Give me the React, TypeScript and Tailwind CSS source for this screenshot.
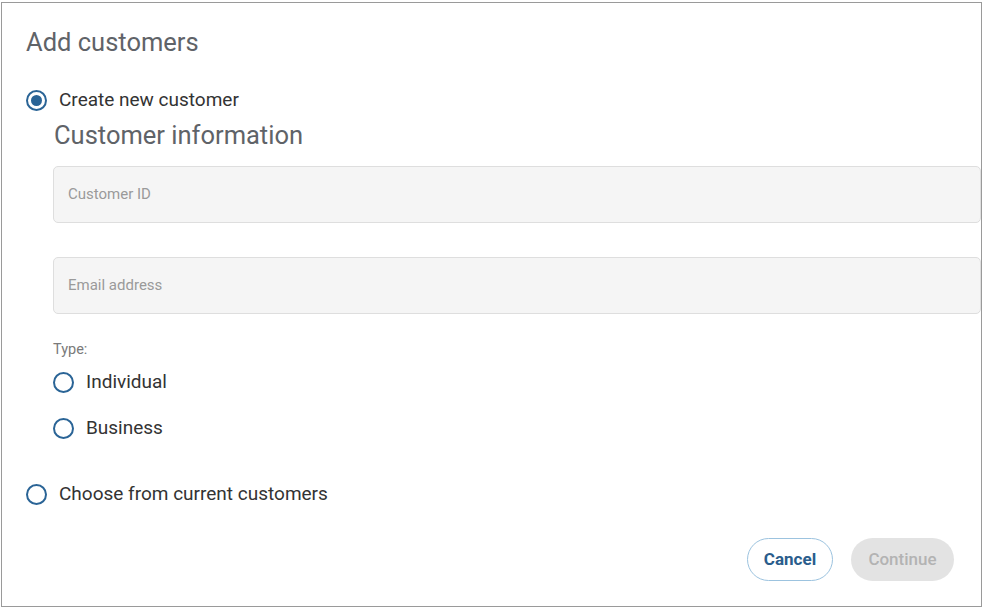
import React from "react";

function Radio({ checked }: { checked?: boolean }) {
  return (
    <span className="flex h-[21px] w-[21px] shrink-0 items-center justify-center rounded-full border-2 border-[#2a6496] bg-white">
      {checked && <span className="h-[11px] w-[11px] rounded-full bg-[#2a6496]" />}
    </span>
  );
}

export default function App() {
  return (
    <div className="h-[609px] w-[984px] bg-white pl-[1px] pt-[2px] font-['Roboto',sans-serif]">
      <div className="flex h-[605px] w-[981px] flex-col border border-[#9a9a9a] pl-[24px]">
        <h1 className="mt-[24px] text-[25.5px] leading-[30px] text-[#5f6368]">Add customers</h1>
        <label className="mt-[31px] flex items-center gap-[12px] pl-0">
          <Radio checked />
          <span className="text-[19px] leading-[24px] text-[#333]">Create new customer</span>
        </label>
        <div className="pl-[27px]">
          <h2 className="ml-[1px] mt-[8px] text-[25.5px] leading-[30px] text-[#5f6368]">Customer information</h2>
          <div className="mt-[16px] flex h-[57px] items-center rounded-[5px] border border-[#dedede] bg-[#f5f5f5] pl-[14px] text-[15px] text-[#9a9a9a]">
            Customer ID
          </div>
          <div className="mt-[34px] flex h-[57px] items-center rounded-[5px] border border-[#dedede] bg-[#f5f5f5] pl-[14px] text-[15px] text-[#9a9a9a]">
            Email address
          </div>
          <div className="mt-[27px] text-[14.5px] leading-[18px] text-[#7a7a7a]">Type:</div>
          <label className="mt-[11px] flex items-center gap-[12px]">
            <Radio />
            <span className="text-[19px] leading-[24px] text-[#333]">Individual</span>
          </label>
          <label className="mt-[22px] flex items-center gap-[12px]">
            <Radio />
            <span className="text-[19px] leading-[24px] text-[#333]">Business</span>
          </label>
        </div>
        <label className="mt-[42px] flex items-center gap-[12px] pl-0">
          <Radio />
          <span className="text-[19px] leading-[24px] text-[#333]">Choose from current customers</span>
        </label>
        <div className="mt-[32px] flex justify-end gap-[18px] pr-[27px]">
          <button className="h-[43px] w-[86px] rounded-full border border-[#9cc3df] bg-white text-[17px] font-bold text-[#2a5d8c]">
            Cancel
          </button>
          <button className="h-[43px] w-[103px] rounded-full bg-[#e3e3e3] text-[17px] font-medium text-[#b3b3b3]">
            Continue
          </button>
        </div>
      </div>
    </div>
  );
}
